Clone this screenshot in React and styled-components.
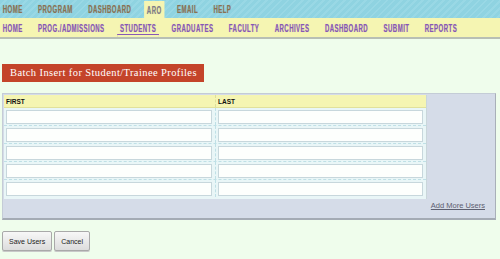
import React from 'react'
import styled, { createGlobalStyle } from 'styled-components'

const mainTabs = ['Home', 'Program', 'Dashboard', 'ARO', 'Email', 'Help']
const subTabs = [
  'Home',
  'Prog./Admissions',
  'Students',
  'Graduates',
  'Faculty',
  'Archives',
  'Dashboard',
  'Submit',
  'Reports',
]

const GlobalStyle = createGlobalStyle`
  body {
    margin: 0;
    background: #effdec;
    font-family: "Liberation Sans", Arial, sans-serif;
  }
`

const App = () => {
  const rows = [0, 1, 2, 3, 4]

  return (
    <Page>
      <GlobalStyle />
      <TopBar>
        <NavStrip>
          {mainTabs.map((t) => (
            <TopTab key={t} active={t === 'ARO'}>
              {t}
            </TopTab>
          ))}
        </NavStrip>
      </TopBar>
      <SubBar>
        <NavStrip>
          {subTabs.map((t) => (
            <SubTab key={t} active={t === 'Students'}>
              {t}
            </SubTab>
          ))}
        </NavStrip>
      </SubBar>

      <Content>
        <Banner>Batch Insert for Student/Trainee Profiles</Banner>

        <Panel>
          <Table>
            <HeaderRow>
              <HeaderCell>First</HeaderCell>
              <HeaderCell divider>Last</HeaderCell>
            </HeaderRow>
            {rows.map((r) => (
              <Row key={r}>
                <Cell>
                  <Field type="text" />
                </Cell>
                <Cell divider>
                  <Field type="text" />
                </Cell>
              </Row>
            ))}
          </Table>
          <PanelFooter>
            <AddLink href="#">Add More Users</AddLink>
          </PanelFooter>
        </Panel>

        <Actions>
          <Button>Save Users</Button>
          <Button>Cancel</Button>
        </Actions>
      </Content>
    </Page>
  )
}

const Page = styled.div`
  width: 500px;
  min-height: 259px;
  overflow: hidden;
`

const TopBar = styled.div`
  height: 18px;
  overflow: hidden;
  background: repeating-linear-gradient(
    135deg,
    #8fd3e1 0px,
    #8fd3e1 3px,
    #99d8e5 3px,
    #99d8e5 5px
  );
`

// the nav font is a tall condensed face; squeeze the whole strip horizontally
const NavStrip = styled.div`
  display: flex;
  align-items: stretch;
  gap: 18px;
  width: 909px;
  height: 100%;
  transform: scaleX(0.55);
  transform-origin: left center;
`

const TopTab = styled.div`
  display: flex;
  align-items: center;
  margin-top: ${(props) => (props.active ? '1px' : '0')};
  padding: 0 5px;
  font-family: "Liberation Sans", Arial, sans-serif;
  font-weight: bold;
  font-size: 11px;
  letter-spacing: 0.8px;
  text-transform: uppercase;
  color: ${(props) => (props.active ? '#7c7c8c' : '#8b7152')};
  background: ${(props) => (props.active ? '#f5f5b2' : 'transparent')};
  text-shadow: 0 0 1px rgba(120, 90, 60, 0.35);
`

const SubBar = styled.div`
  height: 19px;
  overflow: hidden;
  background: #f5f5b2;
  border-bottom: 2px solid #b8bfb4;
`

const SubTab = styled.div`
  display: flex;
  align-items: center;
  padding: 0 5px;
  font-family: "Liberation Sans", Arial, sans-serif;
  font-weight: bold;
  font-size: 11px;
  letter-spacing: 0.8px;
  text-transform: uppercase;
  color: #8757b6;
  text-shadow: 0 0 1px rgba(135, 87, 182, 0.35);
  box-shadow: ${(props) =>
    props.active ? 'inset 0 -2px 0 #f5f5b2, inset 0 -3px 0 #8757b6' : 'none'};
`

const Content = styled.div`
  padding: 25px 4px 8px 2px;
`

const Banner = styled.div`
  width: fit-content;
  height: 18px;
  line-height: 18px;
  padding: 0 7px 0 8px;
  background: #c4442a;
  color: #ffffff;
  font-family: "Liberation Serif", "DejaVu Serif", serif;
  font-size: 10.5px;
  letter-spacing: 0.4px;
`

const Panel = styled.div`
  margin-top: 11px;
  width: 494px;
  box-sizing: border-box;
  padding: 1px 0 0 1px;
  background: #d5dce8;
  border: 1px solid #c4ccd6;
  border-right-color: #a9b0b8;
  border-bottom: 2px solid #a4abb4;
`

const Table = styled.div`
  width: 422px;
  background: #e9f6f7;
  border-right: 1px solid #c9d6da;
  padding-bottom: 2px;
`

const HeaderRow = styled.div`
  display: grid;
  grid-template-columns: 211px 211px;
  height: 12px;
  background: #f5f5b2;
  border-bottom: 1px solid #e1e19c;
`

const HeaderCell = styled.div`
  display: flex;
  align-items: center;
  padding-left: 2px;
  font-size: 6.5px;
  font-weight: bold;
  text-transform: uppercase;
  color: #111;
  border-left: ${(props) => (props.divider ? '1px dashed #dede9a' : 'none')};
`

const Row = styled.div`
  display: grid;
  grid-template-columns: 211px 211px;
  border-bottom: 1px dashed #bfe0e6;

  &:last-child {
    border-bottom: none;
  }
`

const Cell = styled.div`
  padding: 2px 3px 1px 2px;
  border-left: ${(props) => (props.divider ? '1px dashed #bfe0e6' : 'none')};
`

const Field = styled.input`
  display: block;
  width: 100%;
  box-sizing: border-box;
  height: 14px;
  margin: 0;
  background: #fdfffd;
  border: 1px solid #c7d7dc;
  outline: none;
`

const PanelFooter = styled.div`
  display: flex;
  justify-content: flex-end;
  height: 17px;
  padding: 2px 10px 0 0;
`

const AddLink = styled.a`
  font-size: 7.5px;
  color: #5d6070;
  text-decoration: underline;
`

const Actions = styled.div`
  display: flex;
  gap: 2px;
  margin-top: 11px;
`

const Button = styled.button`
  height: 20px;
  padding: 0 6px;
  font-family: "Liberation Sans", Arial, sans-serif;
  font-size: 7px;
  color: #222;
  background: linear-gradient(#f7f7f7, #dcdcdc);
  border: 1px solid #a9a9a9;
  border-radius: 2px;
  box-shadow: 0 1px 0 #c8c8c8;
`

export default App
